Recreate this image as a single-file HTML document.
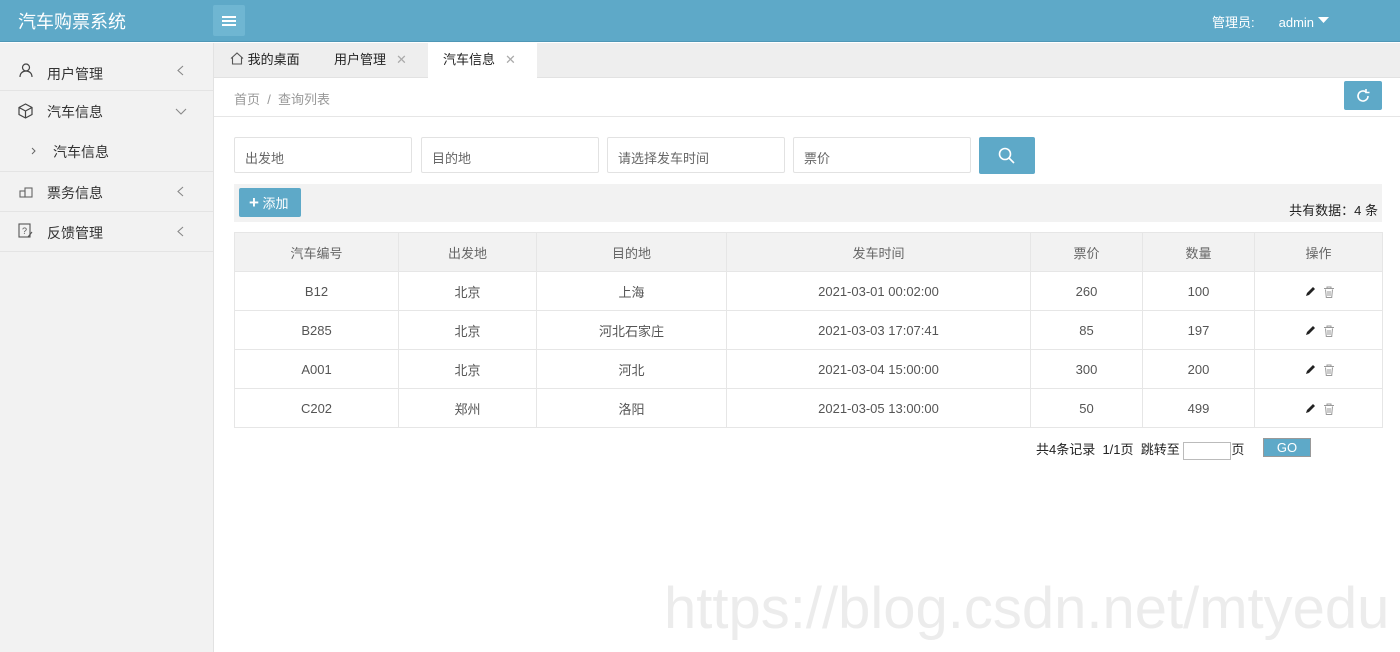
<!DOCTYPE html>
<html><head><meta charset="utf-8"><style>
*{box-sizing:border-box;margin:0;padding:0}
body{width:1400px;height:652px;overflow:hidden;font-family:"Liberation Sans","Noto Sans CJK SC",sans-serif;font-size:14px;color:#333;background:#fff;position:relative}
.hd{position:absolute;left:0;top:0;width:1400px;height:42px;background:#5ea9c8;border-bottom:1px solid #4f97b6}
.logo{position:absolute;left:18px;top:8px;color:#fff;font-size:18px}
.menu{position:absolute;left:213px;top:5px;width:32px;height:31px;background:#6fb6d2;border-radius:2px}
.menu i{position:absolute;left:9px;width:14px;height:1.5px;background:#fff}
.user{position:absolute;left:1212px;top:12px;color:#fff;font-size:13px}
.user b{font-weight:normal;margin-left:24px}
.side{position:absolute;left:0;top:43px;width:214px;height:609px;background:#f2f2f2;border-right:1px solid #e2e2e2}
.si{height:40px;position:relative;border-bottom:1px solid #e4e4e4;font-size:14px}
.si span{position:absolute;left:47px;top:11px}
.si svg.ar{position:absolute;left:177px;top:14px}
.tabs{position:absolute;left:214px;top:43px;width:1186px;height:35px;background:#eeeeee;border-bottom:1px solid #e2e2e2}
.tab{position:absolute;top:0;height:35px;line-height:34px;font-size:13px;color:#222}
.tab .x{color:#aaa;margin-left:10px;font-size:13px}
.bc{position:absolute;left:234px;top:89px;color:#999;font-size:13px}
.line{position:absolute;left:214px;top:116px;width:1186px;height:1px;background:#e6e6e6}
.rf{position:absolute;left:1344px;top:81px;width:38px;height:29px;background:#5ea9c8;border-radius:2px}
.inp{position:absolute;top:137px;height:36px;border:1px solid #e2e2e2;border-radius:2px;width:178px;color:#666;font-size:13px;padding:10px 10px}
.sb{position:absolute;left:979px;top:137px;width:56px;height:37px;background:#5ea9c8;border-radius:2px}
.bar{position:absolute;left:234px;top:184px;width:1148px;height:38px;background:#f2f2f2}
.add{position:absolute;left:239px;top:188px;width:62px;height:29px;background:#5ea9c8;border-radius:2px;color:#fff;font-size:13px;line-height:29px;padding-left:10px}
.cnt{position:absolute;right:4px;top:16px;font-size:13px;color:#222}
table{position:absolute;left:234px;top:232px;width:1149px;border-collapse:collapse;font-size:13px;color:#555}
td,th{border:1px solid #e6e6e6;height:39px;text-align:center;font-weight:normal}
th{background:#f2f2f2;color:#666}
.pg{position:absolute;left:1036px;top:439px;font-size:13px;color:#222}
.pg input{display:inline-block;width:48px;height:18px;border:1px solid #bbb;vertical-align:middle}
.go{position:absolute;left:1263px;top:438px;width:48px;height:19px;background:#5ea9c8;border:1px solid #999;color:#fff;font-size:13px;text-align:center;line-height:17px}
.wm{position:absolute;left:664px;top:575px;font-size:58px;color:#ececec;font-family:"Liberation Sans",sans-serif}
</style></head><body>
<div class="hd"><div class="logo">汽车购票系统</div>
<div class="menu"><i style="top:11px"></i><i style="top:15px"></i><i style="top:19px"></i></div>
<div class="user">管理员:<b>admin <svg width="11" height="7" viewBox="0 0 11 7" style="vertical-align:3px"><path d="M0 0h11L5.5 6z" fill="#fff"/></svg></b></div></div>
<div class="side">
<div class="si" style="height:48px"><svg style="position:absolute;left:19px;top:20px" width="14" height="15" viewBox="0 0 14 15" fill="none" stroke="#444" stroke-width="1.2"><circle cx="7" cy="4.5" r="3.5"/><path d="M1 14c0-4 3-6 6-6s6 2 6 6"/></svg><span style="top:21px">用户管理</span><svg class="ar" style="top:22px" width="7" height="11" viewBox="0 0 7 11" fill="none" stroke="#888" stroke-width="1.1"><path d="M6 1L1 5.5 6 10"/></svg></div>
<div class="si" style="border:none"><svg style="position:absolute;left:18px;top:12px" width="15" height="16" viewBox="0 0 15 16" fill="none" stroke="#444" stroke-width="1.2"><path d="M7.5 1L14 4.5v7L7.5 15 1 11.5v-7z"/><path d="M1 4.5l6.5 3.5 6.5-3.5M7.5 8v7"/></svg><span>汽车信息</span><svg class="ar" style="left:175px;top:17px" width="12" height="7" viewBox="0 0 12 7" fill="none" stroke="#888" stroke-width="1.1"><path d="M1 1l5 5 5-5"/></svg></div>
<div class="si" style="height:41px"><svg style="position:absolute;left:31px;top:16px" width="5" height="8" viewBox="0 0 5 8" fill="none" stroke="#666"><path d="M1 1l3 3-3 3"/></svg><span style="left:53px">汽车信息</span></div>
<div class="si"><svg style="position:absolute;left:19px;top:14px" width="14" height="12" viewBox="0 0 14 12" fill="none" stroke="#666" stroke-width="1.1"><rect x="1" y="5" width="5" height="6"/><rect x="6" y="2" width="7" height="9"/></svg><span>票务信息</span><svg class="ar" width="7" height="11" viewBox="0 0 7 11" fill="none" stroke="#888" stroke-width="1.1"><path d="M6 1L1 5.5 6 10"/></svg></div>
<div class="si"><svg style="position:absolute;left:18px;top:11px" width="15" height="16" viewBox="0 0 15 16" fill="none" stroke="#555" stroke-width="1.1"><rect x="1" y="1" width="11" height="13"/><text x="4" y="11" font-size="9" fill="#555" stroke="none">?</text><path d="M10 14l4-5"/></svg><span>反馈管理</span><svg class="ar" width="7" height="11" viewBox="0 0 7 11" fill="none" stroke="#888" stroke-width="1.1"><path d="M6 1L1 5.5 6 10"/></svg></div>
</div>
<div class="tabs">
<div class="tab" style="left:16px"><svg width="14" height="13" viewBox="0 0 14 13" fill="none" stroke="#555" stroke-width="1.1" style="vertical-align:-1px"><path d="M1 6.5L7 1l6 5.5M2.5 5.5V12h9V5.5"/></svg> 我的桌面</div>
<div class="tab" style="left:120px">用户管理<span class="x">✕</span></div>
<div class="tab" style="left:214px;width:109px;background:#fff;height:36px;padding-left:15px">汽车信息<span class="x">✕</span></div>
</div>
<div class="bc">首页 &nbsp;/&nbsp; 查询列表</div>
<div class="rf"><svg style="margin:7px 11px" width="16" height="16" viewBox="0 0 16 16" fill="none" stroke="#fff" stroke-width="1.6"><path d="M13 8a5 5 0 1 1-2-4"/><path d="M11 1v3.5h3.5" /></svg></div>
<div class="line"></div>
<div class="inp" style="left:234px">出发地</div>
<div class="inp" style="left:421px">目的地</div>
<div class="inp" style="left:607px">请选择发车时间</div>
<div class="inp" style="left:793px">票价</div>
<div class="sb"><svg style="margin:10px 19px" width="18" height="18" viewBox="0 0 18 18" fill="none" stroke="#fff" stroke-width="1.6"><circle cx="7" cy="7" r="5.5"/><path d="M11 11l5 5"/></svg></div>
<div class="bar"><div class="cnt">共有数据：4 条</div></div>
<div class="add"><b style="font-size:17px;font-weight:bold">+</b> 添加</div>
<table>
<tr><th style="width:164px">汽车编号</th><th style="width:138px">出发地</th><th style="width:190px">目的地</th><th style="width:304px">发车时间</th><th style="width:112px">票价</th><th style="width:112px">数量</th><th>操作</th></tr>
<tr><td>B12</td><td>北京</td><td>上海</td><td>2021-03-01 00:02:00</td><td>260</td><td>100</td><td class="op"></td></tr>
<tr><td>B285</td><td>北京</td><td>河北石家庄</td><td>2021-03-03 17:07:41</td><td>85</td><td>197</td><td class="op"></td></tr>
<tr><td>A001</td><td>北京</td><td>河北</td><td>2021-03-04 15:00:00</td><td>300</td><td>200</td><td class="op"></td></tr>
<tr><td>C202</td><td>郑州</td><td>洛阳</td><td>2021-03-05 13:00:00</td><td>50</td><td>499</td><td class="op"></td></tr>
</table>
<svg width="0" height="0" style="position:absolute"><defs><g id="ops"><path d="M1 10l1-3 6-6 2 2-6 6z" fill="#222"/><g fill="none" stroke="#999" stroke-width="1"><path d="M19 2.5h10M22 2.5V1h4v1.5M20.5 3.5l.8 8h5.4l.8-8M23 5v5M25 5v5"/></g></g></defs></svg>
<script>document.querySelectorAll('.op').forEach(function(t){t.innerHTML='<svg width="30" height="12" viewBox="0 0 30 12" style="vertical-align:middle;margin-left:2px"><use href="#ops"/></svg>';});</script>
<div class="pg">共4条记录 &nbsp;1/1页 &nbsp;跳转至 <input>页</div>
<div class="go">GO</div>
<div class="wm">https://blog.csdn.net/mtyedu</div>
</body></html>
